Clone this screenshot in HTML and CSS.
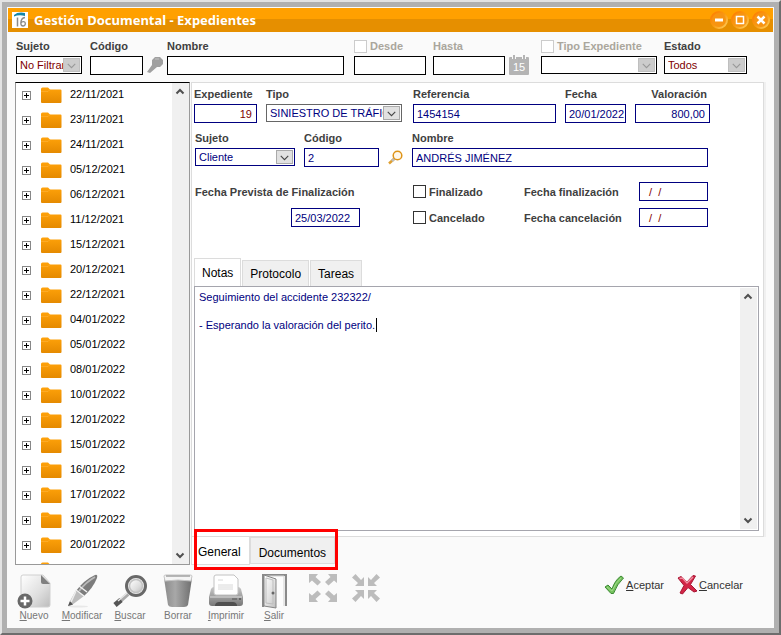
FILE: index.html
```html
<!DOCTYPE html>
<html lang="es">
<head>
    <meta charset="UTF-8">
    <meta name="viewport" content="width=device-width, initial-scale=1.0">
    <title>Gestión Documental - Expedientes</title>
    <link rel="stylesheet" href="styles.css">
</head>
<body>
    <svg class="defs" width="0" height="0" aria-hidden="true">
        <defs>
            <linearGradient id="gFolder" x1="0" y1="0" x2="0" y2="1">
                <stop offset="0" stop-color="#ffa20a"/><stop offset="1" stop-color="#e58a00"/>
            </linearGradient>
            <linearGradient id="gBall" x1="0" y1="0" x2="1" y2="1">
                <stop offset="0" stop-color="#ff7a00"/><stop offset="0.5" stop-color="#f99a10"/><stop offset="1" stop-color="#ffd060"/>
            </linearGradient>
            <linearGradient id="gPage" x1="0" y1="0" x2="1" y2="1">
                <stop offset="0" stop-color="#ffffff"/><stop offset="0.6" stop-color="#dedede"/><stop offset="1" stop-color="#bcbcbc"/>
            </linearGradient>
            <linearGradient id="gDark" x1="0" y1="0" x2="1" y2="0">
                <stop offset="0" stop-color="#8a8a8a"/><stop offset="0.4" stop-color="#a8a8a8"/><stop offset="1" stop-color="#6e6e6e"/>
            </linearGradient>
            <linearGradient id="gPrint" x1="0" y1="0" x2="0" y2="1">
                <stop offset="0" stop-color="#c8c8c8"/><stop offset="1" stop-color="#777777"/>
            </linearGradient>
        </defs>
        <symbol id="folder" viewBox="0 0 21 17">
            <path d="M0 2q0-1.500 1.500-1.500h5.500l2 2h10.500q1 0 1 1V15q0 1-1 1H1q-1 0-1-1z" fill="url(#gFolder)"/>
            <path d="M0 4.500h7l2-2" fill="none" stroke="#ffb43c" stroke-width="0.600"/>
        </symbol>
        <symbol id="down" viewBox="0 0 16 16"><path d="M3 6.500l5 5 5-5" fill="none" stroke="currentColor" stroke-width="1.500"/></symbol>
        <symbol id="scrollup" viewBox="0 0 16 16"><path d="M4.500 10l3.500-3.500 3.500 3.500" fill="none" stroke="#505050" stroke-width="2"/></symbol>
        <symbol id="scrolldown" viewBox="0 0 16 16"><path d="M4.500 6l3.500 3.500 3.500-3.500" fill="none" stroke="#505050" stroke-width="2"/></symbol>
    </svg>

    <div class="window">
        <header class="titlebar">
            <svg class="logo" viewBox="0 0 16 16">
                <rect width="16" height="16" fill="#fff"/>
                <path d="M2 3Q6-.5 13 1v3Q7 2.500 2 4.500z" fill="#1686a8"/>
                <path d="M5.500 5.500v9" stroke="#8a8a8a" stroke-width="1.500" fill="none"/>
                <path d="M13 5.500Q9 6 8.800 11q0 3 2.200 3t2.300-2.200-2-2.200-2.300 1.500" stroke="#8a8a8a" stroke-width="1.300" fill="none"/>
            </svg>
            <h1>Gestión Documental - Expedientes</h1>
            <div class="window-buttons">
                <button type="button" aria-label="Minimizar"><svg viewBox="0 0 18 18"><circle cx="9" cy="9" r="8" fill="#f79412" stroke="url(#gBall)" stroke-width="2"/><path d="M5 9h8" stroke="#fff" stroke-width="3"/></svg></button>
                <button type="button" aria-label="Maximizar"><svg viewBox="0 0 18 18"><circle cx="9" cy="9" r="8" fill="#f79412" stroke="url(#gBall)" stroke-width="2"/><rect x="5.500" y="5.500" width="7" height="7" fill="none" stroke="#fff" stroke-width="1.500"/></svg></button>
                <button type="button" aria-label="Cerrar"><svg viewBox="0 0 18 18"><circle cx="9" cy="9" r="8" fill="#f79412" stroke="url(#gBall)" stroke-width="2"/><path d="M5.500 5.500l7 7m0-7l-7 7" stroke="#fff" stroke-width="2.500"/></svg></button>
            </div>
        </header>

        <form class="filters">
            <div class="field">
                <label for="f_sujeto">Sujeto</label>
                <span class="select red off"><select id="f_sujeto"><option>No Filtrar</option></select><svg><use href="#down"/></svg></span>
            </div>
            <div class="field">
                <label for="f_codigo">Código</label>
                <input type="text" id="f_codigo">
            </div>
            <button type="button" class="icon-button" aria-label="Buscar sujeto">
                <svg width="16" height="17" viewBox="0 0 16 17"><path d="M8 1h5l3 3v4l-3 3h-3L3 17 0 16l5-7V4z" fill="#a0a0a0"/><path d="M8 3h4" stroke="#c2c2c2"/></svg>
            </button>
            <div class="field">
                <label for="f_nombre">Nombre</label>
                <input type="text" id="f_nombre">
            </div>
            <div class="field muted">
                <span class="check-label"><input type="checkbox" id="f_rango" aria-label="Filtrar por fecha"><label for="f_desde">Desde</label></span>
                <input type="text" id="f_desde">
            </div>
            <div class="field muted">
                <label for="f_hasta">Hasta</label>
                <input type="text" id="f_hasta">
            </div>
            <button type="button" class="icon-button calendar" aria-label="Calendario">
                <svg width="20" height="20" viewBox="0 0 20 20"><rect y="2" width="20" height="18" rx="1" fill="#b4b4b4"/><path d="M5 0v4M15 0v4" stroke="#fafafa" stroke-width="4"/><path d="M5 0v4M15 0v4" stroke="#b4b4b4" stroke-width="2"/><text x="10" y="16" text-anchor="middle">15</text></svg>
            </button>
            <div class="field muted">
                <span class="check-label"><input type="checkbox" id="f_usatipo" aria-label="Filtrar por tipo"><label for="f_tipo">Tipo Expediente</label></span>
                <span class="select off"><select id="f_tipo"><option></option></select><svg><use href="#down"/></svg></span>
            </div>
            <div class="field">
                <label for="f_estado">Estado</label>
                <span class="select red off"><select id="f_estado"><option>Todos</option></select><svg><use href="#down"/></svg></span>
            </div>
        </form>

        <main>
            <nav class="tree">
                <ul id="dateTree"></ul>
                <div class="scrollbar"><svg><use href="#scrollup"/></svg><svg><use href="#scrolldown"/></svg></div>
            </nav>

            <section class="detail">
                <form class="record">
                    <div class="row row-ids">
                        <div class="field"><label for="expediente">Expediente</label><input type="text" id="expediente" class="num red" value="19"></div>
                        <div class="field"><label for="tipo">Tipo</label><span class="select gray"><select id="tipo"><option>SINIESTRO DE TRÁFICO</option></select><svg><use href="#down"/></svg></span></div>
                        <div class="field"><label for="referencia">Referencia</label><input type="text" id="referencia" value="1454154"></div>
                        <div class="field"><label for="fecha">Fecha</label><input type="text" id="fecha" value="20/01/2022"></div>
                        <div class="field right"><label for="valoracion">Valoración</label><input type="text" id="valoracion" class="num" value="800,00"></div>
                    </div>
                    <div class="row row-person">
                        <div class="field"><label for="sujeto">Sujeto</label><span class="select"><select id="sujeto"><option>Cliente</option></select><svg><use href="#down"/></svg></span></div>
                        <div class="field"><label for="codigo">Código</label><input type="text" id="codigo" value="2"></div>
                        <button type="button" class="icon-button" aria-label="Buscar cliente">
                            <svg width="15" height="15" viewBox="0 0 15 15"><path d="M6.500 8.500L1 13.500" stroke="#e0a030" stroke-width="2.500"/><path d="M6.500 8.500L4 11" stroke="#bbb" stroke-width="2.500"/><circle cx="9.500" cy="5.500" r="4.300" fill="#fff8ec" stroke="#de9418" stroke-width="1.500"/></svg>
                        </button>
                        <div class="field"><label for="nombre">Nombre</label><input type="text" id="nombre" value="ANDRÉS JIMÉNEZ"></div>
                    </div>
                    <div class="row row-dates">
                        <label for="prevista">Fecha Prevista de Finalización</label>
                        <span class="check-label"><input type="checkbox" id="finalizado"><label for="finalizado">Finalizado</label></span>
                        <label for="fecha_fin">Fecha finalización</label>
                        <input type="text" id="fecha_fin" class="red" value="  /  /">
                        <input type="text" id="prevista" value="25/03/2022">
                        <span class="check-label"><input type="checkbox" id="cancelado"><label for="cancelado">Cancelado</label></span>
                        <label for="fecha_canc">Fecha cancelación</label>
                        <input type="text" id="fecha_canc" class="red" value="  /  /">
                    </div>
                </form>

                <div class="tabs">
                    <button type="button" class="active">Notas</button>
                    <button type="button">Protocolo</button>
                    <button type="button">Tareas</button>
                </div>
                <div class="notes">
                    <textarea id="notas" aria-label="Notas">Seguimiento del accidente 232322/

- Esperando la valoración del perito.</textarea>
                    <span class="caret"></span>
                    <div class="scrollbar"><svg><use href="#scrollup"/></svg><svg><use href="#scrolldown"/></svg></div>
                </div>
            </section>

            <div class="bottom-tabs">
                <button type="button" class="active">General</button>
                <button type="button">Documentos</button>
            </div>
        </main>

        <footer class="toolbar">
            <button type="button" class="tool">
                <svg viewBox="0 0 36 36"><path d="M7 2h20l7 8v22q0 2-2 2H7q-2 0-2-2V4q0-2 2-2z" fill="url(#gPage)" stroke="#d0d0d0"/><path d="M25 2l9 9h-7q-2 0-2-2z" fill="#808080"/><circle cx="9" cy="28" r="7.500" fill="#686868"/><path d="M9 23.500v9M4.500 28h9" stroke="#fff" stroke-width="2.500"/></svg>
                <span><u>N</u>uevo</span>
            </button>
            <button type="button" class="tool">
                <svg viewBox="0 0 36 36"><ellipse cx="14" cy="33.500" rx="10" ry="1" fill="#e8e8e8"/><path d="M12 17l8 6-12 9-4 1 2-5z" fill="#bdbdbd"/><path d="M4 33l2-5 3 3.500z" fill="#555"/><path d="M12 18L7 29" stroke="#eee" stroke-width="1.500"/><path d="M12 18Q20 7 31 2q3-1 2 3-4 10-13 18z" fill="#7c7c7c"/><path d="M15 18Q22 9 31 4" fill="none" stroke="#bababa" stroke-width="2"/><path d="M12 17l8 6M15 13l8 6" stroke="#f2f2f2" stroke-width="1.500"/></svg>
                <span><u>M</u>odificar</span>
            </button>
            <button type="button" class="tool">
                <svg viewBox="0 0 36 36"><path d="M16 21L7 29" stroke="#aaa" stroke-width="4"/><path d="M9 27l-6 5" stroke="#555" stroke-width="5"/><path d="M15 20l-9 8" stroke="#e8e8e8" stroke-width="1.500"/><circle cx="24" cy="13" r="9.500" fill="#eeeeee" stroke="#686868" stroke-width="3"/><circle cx="24" cy="13" r="6.500" fill="url(#gPage)" stroke="#c2c2c2" stroke-width="1.500"/></svg>
                <span><u>B</u>uscar</span>
            </button>
            <button type="button" class="tool">
                <svg viewBox="0 0 36 36"><path d="M4 5h28l-4 27q-1 2-4 2H12q-3 0-4-2z" fill="url(#gDark)"/><path d="M4 3q0-1 2-1h24q2 0 2 1l-1 5q-13-2-26 0z" fill="#f4f4f4" stroke="#c5c5c5"/><path d="M6 3h24" stroke="#a2a2a2" stroke-width="1.500"/></svg>
                <span>Borrar</span>
            </button>
            <button type="button" class="tool">
                <svg viewBox="0 0 36 36"><path d="M6 14h24q2 0 3 2l2 8v6q0 3-3 3H4q-3 0-3-3v-6l2-8q1-2 3-2z" fill="url(#gPrint)"/><path d="M6 4q0-2 2-2h18l4 4v14q0 2-2 2H8q-2 0-2-2z" fill="#fff" stroke="#c2c2c2"/><path d="M10 7h5M10 12h15M10 14h15M10 16h15" stroke="#d8d8d8"/><path d="M2 24h32" stroke="#ddd"/><path d="M7 32q1-3 4-3h14q3 0 4 3v1H7z" fill="#505050"/><path d="M24 26h5" stroke="#555"/><circle cx="32" cy="26" r="1" fill="#555"/></svg>
                <span><u>I</u>mprimir</span>
            </button>
            <button type="button" class="tool">
                <svg viewBox="0 0 36 36"><path d="M7 34V2h23v31" fill="#fcfcfc" stroke="#8a8a8a" stroke-width="2"/><path d="M8 3h20v30" fill="none" stroke="#d2d2d2"/><path d="M8 2l12 4v29L8 33z" fill="url(#gPage)" stroke="#858585"/><path d="M10 5l7 2v24l-7-1z" fill="none" stroke="#bdbdbd"/><circle cx="17" cy="20" r="1.500" fill="#666"/></svg>
                <span><u>S</u>alir</span>
            </button>
            <button type="button" class="size-button" aria-label="Expandir">
                <svg viewBox="0 0 28 28" fill="#bcbcbc"><path id="corner" d="M0 0h9L6.500 3l5.500 5-3.500 3.500L3 6.500 0 9z"/><use href="#corner" transform="matrix(-1 0 0 1 28 0)"/><use href="#corner" transform="matrix(1 0 0 -1 0 28)"/><use href="#corner" transform="rotate(180 14 14)"/></svg>
            </button>
            <button type="button" class="size-button" aria-label="Contraer">
                <svg viewBox="0 0 28 28" fill="#bcbcbc"><path id="inner" d="M12 12H3l3-3L0 3.500 3.500 0 9 6l3-3z"/><use href="#inner" transform="matrix(-1 0 0 1 28 0)"/><use href="#inner" transform="matrix(1 0 0 -1 0 28)"/><use href="#inner" transform="rotate(180 14 14)"/></svg>
            </button>
            <div class="actions">
                <button type="button">
                    <svg viewBox="0 0 20 20"><path d="M1 12l3-2 4 4Q11 5 17 1l2.500 2Q13 9 9.500 18.500H7z" fill="#74c15c" stroke="#3d8a35"/><path d="M3 12l5 4Q12 7 17 3" fill="none" stroke="#a2dc8c"/></svg>
                    <span><u>A</u>ceptar</span>
                </button>
                <button type="button">
                    <svg viewBox="0 0 20 20"><path d="M1 3l3-1.500L10 7l6-6.500L18.500 1l-5 8.500L20 16l-3 1-6-4.500L5.500 19 3 18l4-7.500z" fill="#d32546" stroke="#a81634"/><path d="M2.500 3.500l3-.5L10 8l6-6" fill="none" stroke="#ee8fa0" stroke-width="1.500"/></svg>
                    <span><u>C</u>ancelar</span>
                </button>
            </div>
        </footer>
    </div>

    <script>
        var dates = ["22/11/2021", "23/11/2021", "24/11/2021", "05/12/2021", "06/12/2021",
            "11/12/2021", "15/12/2021", "20/12/2021", "22/12/2021", "04/01/2022",
            "05/01/2022", "08/01/2022", "10/01/2022", "12/01/2022", "15/01/2022",
            "16/01/2022", "17/01/2022", "19/01/2022", "20/01/2022", ""];
        var tree = document.getElementById("dateTree");

        dates.forEach(function(date) {
            var item = document.createElement("li");
            item.innerHTML = '<button type="button" class="expand" aria-label="Expandir"></button>' +
                '<svg class="folder"><use href="#folder"/></svg><span>' + date + '</span>';
            tree.appendChild(item);
        });
    </script>
</body>
</html>
```
FILE: styles.css
```css
* {
    box-sizing: border-box;
}
body {
    margin: 0;
    font-family: "Liberation Sans", Arial, sans-serif;
    font-size: 11px;
    color: #000;
}
.defs {
    position: absolute;
}
svg {
    display: block;
    flex: none;
}
button, input, select, textarea {
    font: inherit;
    margin: 0;
    border-radius: 0;
}
button {
    padding: 0;
    border: none;
    background: none;
    color: inherit;
    cursor: pointer;
}
.window {
    display: flex;
    flex-direction: column;
    height: 100vh;
    padding: 0 5px 5px;
    border: 2px solid #e3e3e3;
    border-right-color: #6d6d6d;
    border-bottom-color: #6d6d6d;
    background: #fafafa;
    box-shadow: inset 5px 5px #b0b0b0, inset -5px -5px #b0b0b0;
}

/* title bar */
.titlebar {
    display: flex;
    align-items: center;
    gap: 6px;
    height: 24px;
    margin: 6px 1px 0;
    padding: 0 3px 0 4px;
    background: linear-gradient(#ffa000 0 11px, #e68f00 11px);
    flex: none;
}
.logo {
    width: 16px;
    height: 16px;
}
.titlebar h1 {
    margin: 0;
    font-family: "Noto Sans", "Open Sans", sans-serif;
    font-size: 13px;
    font-weight: bold;
    color: #fff;
}
.window-buttons {
    display: flex;
    gap: 3px;
    margin-left: auto;
}
.window-buttons svg {
    width: 18px;
    height: 18px;
}

/* fields */
.field {
    display: flex;
    flex-direction: column;
    gap: 2px;
    min-width: 0;
}
label {
    font-weight: bold;
    line-height: 16px;
    color: #404040;
    white-space: nowrap;
}
.right label {
    text-align: right;
    padding-right: 3px;
}
.muted label {
    color: #aaa69c;
}
input[type="text"] {
    width: 100%;
    height: 19px;
    padding: 0 0 0 3px;
    border: 1px solid #000080;
    background: #fff;
    color: #000080;
}
input[type="text"].num {
    text-align: right;
    padding-right: 4px;
}
input[type="checkbox"] {
    appearance: none;
    width: 13px;
    height: 13px;
    border: 1px solid #333;
    background: #fff;
}
.muted input[type="checkbox"] {
    border-color: #ccc;
}
.check-label {
    display: flex;
    align-items: center;
    gap: 3px;
}
.select {
    position: relative;
    display: block;
}
.select select {
    display: block;
    appearance: none;
    width: 100%;
    height: 18px;
    padding: 0 17px 0 3px;
    border: 1px solid #000080;
    background: #fff;
    color: #000080;
    overflow: hidden;
    text-overflow: clip;
}
.select.gray select {
    border-color: #666;
}
input[type="text"].red, .select.red select {
    color: #800000;
}
.select svg {
    position: absolute;
    right: 2px;
    top: 2px;
    width: 17px;
    height: 14px;
    border: 1px solid #aaa;
    background: #e1e1e1;
    color: #444;
    pointer-events: none;
}
.select.off svg {
    background: #ccc;
    border-color: #bfbfbf;
    color: #999;
}
.filters {
    display: grid;
    grid-template-columns: 70px 53px 16px 1fr 75px 72px 28px 119px 83px;
    column-gap: 4px;
    align-items: end;
    padding: 6px 27px 7px 9px;
}
.filters input[type="text"], .filters select {
    border-color: #000;
}
.filters .field {
    height: 37px;
}
.filters .field:nth-child(1) {
    padding-right: 4px;
}
.filters .field:nth-child(4) {
    padding-right: 6px;
}
.filters .field:nth-child(5), .filters .field:nth-child(8) {
    padding-right: 3px;
}
.icon-button {
    align-self: end;
    padding-bottom: 2px;
}
.filters .calendar {
    padding-bottom: 0;
}
.calendar text {
    font-size: 11px;
    fill: #fff;
}

/* main area */
main {
    display: grid;
    grid-template-columns: 175px 1fr;
    grid-template-rows: 1fr 28px;
    column-gap: 1px;
    flex: 1;
    min-height: 0;
    padding: 0 10px 0 8px;
}
.tree {
    grid-row: 1 / 3;
    display: flex;
    min-height: 0;
    border: 1px solid #999;
    border-top-color: #000;
    background: #fff;
}
.tree ul {
    flex: 1;
    margin: 0;
    padding: 0;
    list-style: none;
    overflow: hidden;
}
.tree li {
    display: flex;
    align-items: center;
    height: 25px;
    padding-left: 6px;
}
.tree li span {
    margin: 0 0 4px 8px;
}
.folder {
    width: 21px;
    height: 17px;
    margin-left: 10px;
}
.expand {
    width: 9px;
    height: 9px;
    border: 1px solid #888;
    background: linear-gradient(#000, #000) center / 5px 1px no-repeat, linear-gradient(#000, #000) center / 1px 5px no-repeat, #fff;
}
.scrollbar {
    display: flex;
    flex-direction: column;
    justify-content: space-between;
    width: 17px;
    background: #f0f0f0;
}
.scrollbar svg {
    width: 16px;
    height: 17px;
}
.detail {
    display: flex;
    flex-direction: column;
    min-height: 0;
    border: 1px solid #dcdcdc;
    box-shadow: 2px 0 #f0f0f0;
    background: #fff;
    padding: 3px 4px 5px 2px;
}
.record {
    display: flex;
    flex-direction: column;
    gap: 7px;
    padding-right: 49px;
}
.row {
    display: grid;
    align-items: start;
}
.row-ids {
    grid-template-columns: 63px 138px 1fr 61px 75px;
    column-gap: 9px;
}
.row-ids .field:nth-child(2) {
    padding-right: 2px;
}
.row-person {
    grid-template-columns: 100px 75px 15px 1fr;
    column-gap: 9px;
    padding: 0 2px 0 1px;
}
.row-dates {
    grid-template-columns: 218px 1fr 115px 69px;
    align-items: center;
    row-gap: 7px;
    margin-top: 8px;
    padding: 0 2px 0 1px;
}
.row-dates #prevista {
    width: 69px;
    margin-left: 96px;
}
.row-dates .red {
    white-space: pre;
}
.tabs, .bottom-tabs {
    display: flex;
    font-size: 12px;
}
.tabs {
    align-items: flex-end;
    margin-top: 31px;
    gap: 1px;
}
.tabs button {
    height: 26px;
    padding: 0 7px;
    border: 1px solid #dcdcdc;
    border-bottom: none;
    background: #f0f0f0;
}
.tabs .active {
    height: 28px;
    background: #fff;
}
.notes {
    position: relative;
    display: flex;
    flex: 1;
    min-height: 0;
    border: 1px solid #a5a5ad;
    padding: 1px;
}
.notes textarea {
    flex: 1;
    padding: 2px 3px;
    border: none;
    outline: none;
    resize: none;
    overflow: hidden;
    line-height: 14px;
    color: #000080;
}
.caret {
    position: absolute;
    left: 181px;
    top: 31px;
    width: 1px;
    height: 14px;
    background: #000;
}

/* lower tabs, with the red frame around them */
.bottom-tabs {
    position: relative;
    align-items: flex-start;
    justify-self: start;
}
.bottom-tabs button {
    height: 27px;
    padding: 5px 8px 0;
    border: 1px solid #dcdcdc;
    background: #f0f0f0;
}
.bottom-tabs .active {
    height: 28px;
    padding: 2px 8px 0 6px;
    background: #fff;
    border-top: none;
}
.bottom-tabs::after {
    content: "";
    position: absolute;
    left: 3px;
    right: -3px;
    top: -8px;
    bottom: -5px;
    border: 3px solid #f00;
    pointer-events: none;
}

/* toolbar */
.toolbar {
    display: flex;
    flex: none;
    height: 63px;
    padding: 8px 31px 0 3px;
}
.tool {
    display: flex;
    flex-direction: column;
    align-items: center;
    gap: 1px;
    width: 48px;
    height: 48px;
    font-size: 10px;
    line-height: 12px;
    color: #777;
}
.tool svg {
    width: 36px;
    height: 36px;
}
.size-button {
    height: 30px;
    margin-left: 11px;
}
.size-button + .size-button {
    margin-left: 15px;
}
.size-button svg {
    width: 28px;
    height: 28px;
}
.actions {
    display: flex;
    gap: 13px;
    margin-left: auto;
    height: 24px;
}
.actions button {
    display: flex;
    align-items: center;
    gap: 2px;
    color: #333;
}
.actions svg {
    width: 20px;
    height: 20px;
}
```
